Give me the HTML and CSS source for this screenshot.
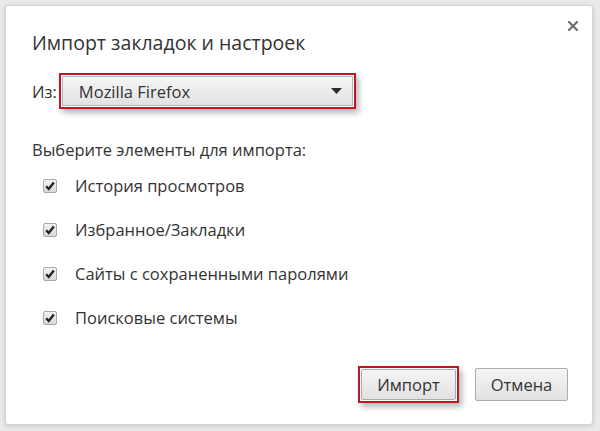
FILE: index.html
```html
<!DOCTYPE html>
<html lang="ru">
<head>
    <meta charset="UTF-8">
    <title>Импорт закладок и настроек</title>
    <link rel="stylesheet" href="styles.css">
</head>
<body>
    <div class="dialog">
        <div class="close">
            <svg viewBox="0 0 10 10" width="10" height="10">
                <path d="M1 1L9 9M9 1L1 9" stroke="#6d6d6d" stroke-width="2.2" stroke-linecap="square"/>
            </svg>
        </div>
        <h1 class="title">Импорт закладок и настроек</h1>

        <div class="from_row">
            <span class="from_label">Из:</span>
            <div class="mark">
                <div class="select">
                    <span>Mozilla Firefox</span>
                    <svg viewBox="0 0 11 6" width="11" height="6">
                        <path d="M0 0H11L5.5 6Z" fill="#2b2b2b"/>
                    </svg>
                </div>
            </div>
        </div>

        <div class="choose">Выберите элементы для импорта:</div>
        <div class="items">
            <div class="item"><span class="box"><svg viewBox="0 0 10 10" width="10" height="10"><path d="M1.2 5.2L3.8 8L8.8 1.6" fill="none" stroke="#222" stroke-width="2.4"/></svg></span>История просмотров</div>
            <div class="item"><span class="box"><svg viewBox="0 0 10 10" width="10" height="10"><path d="M1.2 5.2L3.8 8L8.8 1.6" fill="none" stroke="#222" stroke-width="2.4"/></svg></span>Избранное/Закладки</div>
            <div class="item"><span class="box"><svg viewBox="0 0 10 10" width="10" height="10"><path d="M1.2 5.2L3.8 8L8.8 1.6" fill="none" stroke="#222" stroke-width="2.4"/></svg></span>Сайты с сохраненными паролями</div>
            <div class="item"><span class="box"><svg viewBox="0 0 10 10" width="10" height="10"><path d="M1.2 5.2L3.8 8L8.8 1.6" fill="none" stroke="#222" stroke-width="2.4"/></svg></span>Поисковые системы</div>
        </div>

        <div class="footer">
            <div class="mark">
                <button class="btn">Импорт</button>
            </div>
            <button class="btn cancel">Отмена</button>
        </div>
    </div>
</body>
</html>
```

FILE: styles.css
```css
*{
    font-family: "Open Sans", "Noto Sans", sans-serif;
    box-sizing: border-box;
}
body{
    margin: 0;
    background-color: #e9e9e9;
    width: 600px;
    height: 431px;
    overflow: hidden;
}
.dialog{
    position: relative;
    margin: 5px 0 0 5px;
    width: 588px;
    height: 420px;
    background-color: #fff;
    border: 1px solid #d4d4d4;
    border-radius: 3px;
    box-shadow: 0 1px 4px rgba(0,0,0,.15);
    padding: 24px 24px 21px 26px;
    display: flex;
    flex-direction: column;
    color: #333;
}
.close{
    position: absolute;
    top: 15px;
    right: 14px;
    width: 10px;
    height: 10px;
    display: flex;
}
.title{
    margin: 0;
    font-size: 19.5px;
    font-weight: 400;
    line-height: 26px;
    color: #333;
}
.from_row{
    display: flex;
    align-items: center;
    gap: 2px;
    margin-top: 17px;
}
.from_label{
    font-size: 16.5px;
}
.mark{
    border: 2px solid #c0161e;
    padding: 1px;
    box-shadow: 3px 4px 6px rgba(0,0,0,.28);
    background-color: #fff;
}
.select{
    width: 291px;
    height: 30px;
    border: 1px solid #a9b7cc;
    background: linear-gradient(#f6f6f6, #e2e2e2);
    display: flex;
    align-items: center;
    justify-content: space-between;
    padding: 0 10px 0 16px;
    font-size: 16.5px;
    color: #333;
}
.choose{
    margin-top: 30px;
    font-size: 16.5px;
    line-height: 22px;
}
.items{
    display: flex;
    flex-direction: column;
    gap: 22px;
    margin-top: 14px;
    padding-left: 11px;
}
.item{
    display: flex;
    align-items: center;
    gap: 18px;
    font-size: 16.5px;
    line-height: 22px;
}
.box{
    width: 14px;
    height: 14px;
    border: 1px solid #a8a8a8;
    border-radius: 2px;
    background: linear-gradient(#f2f2f2, #d8d8d8);
    display: flex;
    align-items: center;
    justify-content: center;
}
.footer{
    margin-top: auto;
    display: flex;
    justify-content: flex-end;
    align-items: center;
    gap: 16px;
}
.btn{
    height: 31px;
    width: 95px;
    border: 1px solid #acacac;
    border-radius: 2px;
    background: linear-gradient(#f5f5f5, #e1e1e1);
    font-size: 16.5px;
    color: #333;
    padding: 0;
    display: block;
}
.cancel{
    height: 33px;
    width: 93px;
}
```
